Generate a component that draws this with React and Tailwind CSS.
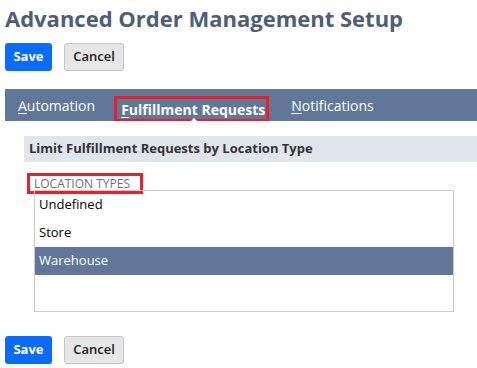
import React from "react";

function Buttons() {
  return (
    <div className="flex gap-3 pl-[5px]">
      <button className="h-[28px] w-[47px] rounded-[3px] bg-[#0a6cff] text-[13px] font-bold text-white">Save</button>
      <button className="h-[28px] w-[60px] rounded-[3px] border border-[#c4c4c4] bg-[#e6e6e6] text-[13px] font-semibold text-[#222]">Cancel</button>
    </div>
  );
}

export default function App() {
  return (
    <div className="h-[368px] w-[477px] overflow-hidden bg-white" style={{ fontFamily: '"Open Sans", sans-serif' }}>
      <h1 className="pl-[5px] pt-[3px] text-[22px] font-bold leading-[30px] text-[#4d5e78]">Advanced Order Management Setup</h1>
      <div className="mt-[10px]">
        <Buttons />
      </div>
      <div className="relative ml-[5px] mt-[18px] flex h-[32px] items-center bg-[#607799] text-[14px] text-white">
        <span className="ml-[13px]"><span className="underline underline-offset-2">A</span>utomation</span>
        <span className="relative ml-[19px] flex h-[25px] items-center self-end border-[3px] border-b-[2px] border-[#e8202a] pl-[4px] pr-[1px] pt-[1px] font-bold">
          <span><span className="underline underline-offset-2">F</span>ulfillment Requests</span>
          <span className="absolute bottom-[-2px] left-[74px] h-0 w-0 border-x-[3px] border-b-[3px] border-x-transparent border-b-white"></span>
        </span>
        <span className="ml-[22px]"><span className="underline underline-offset-2">N</span>otifications</span>
      </div>
      <div className="ml-[24px] mt-[15px] flex h-[26px] items-center bg-[#e0e5ec] pl-[5px] text-[13px] font-bold text-[#333]">
        Limit Fulfillment Requests by Location Type
      </div>
      <div className="ml-[27px] mt-[11px] w-[116px] border-[3px] border-[#e8202a] pl-[4px] text-[12px] leading-[15px] text-[#707070]">
        LOCATION TYPES
      </div>
      <div className="ml-[34px] mt-[-4px] h-[122px] w-[420px] border border-[#cccccc] text-[13px] text-black">
        <div className="flex h-[28px] items-center pl-[4px]">Undefined</div>
        <div className="flex h-[28px] items-center pl-[4px]">Store</div>
        <div className="flex h-[28px] items-center bg-[#607799] pl-[4px] text-white">Warehouse</div>
      </div>
      <div className="mt-[24px]">
        <Buttons />
      </div>
    </div>
  );
}
